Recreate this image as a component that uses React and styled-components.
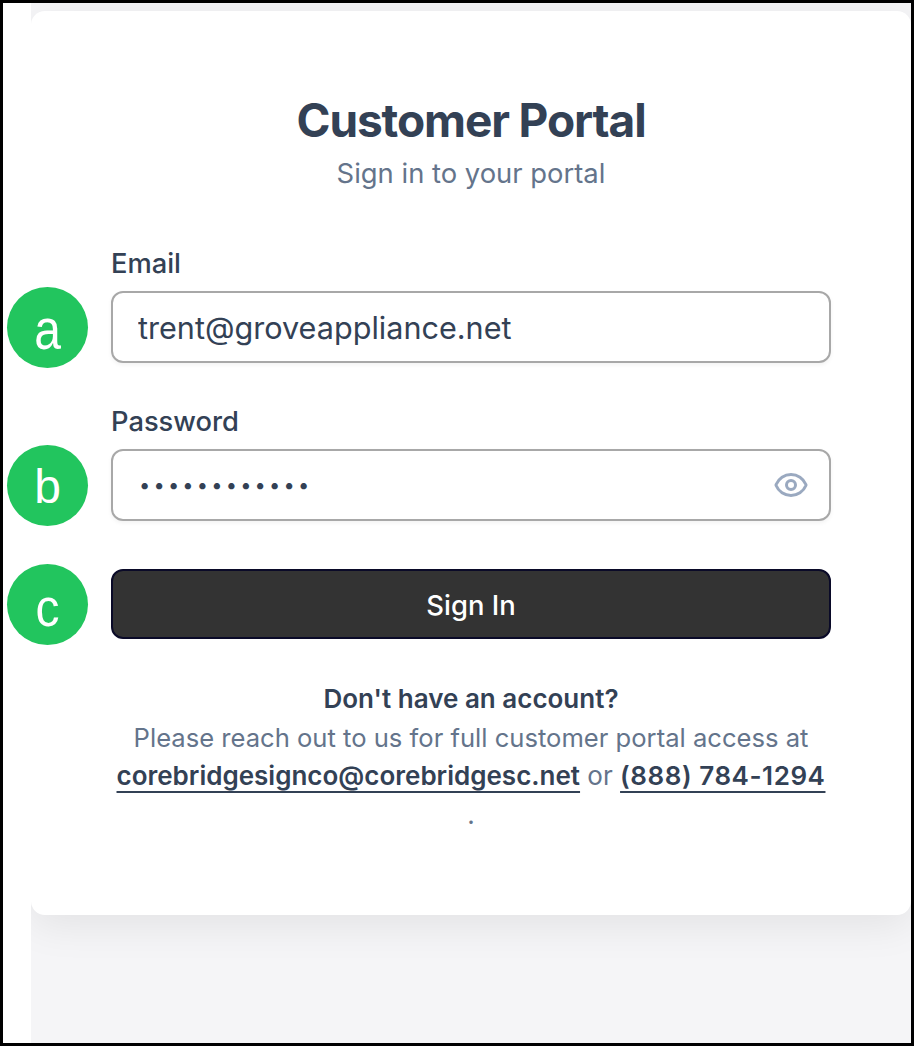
import React from "react";
import styled, { createGlobalStyle } from "styled-components";
import { Eye } from "lucide-react";

const Global = createGlobalStyle`
  html, body { margin: 0; padding: 0; background: #fff; }
  * { box-sizing: border-box; }
`;

const Frame = styled.div`
  position: relative;
  width: 914px;
  height: 1046px;
  border: 3px solid #000;
  background: #fff;
  overflow: hidden;
  font-family: Inter, "Liberation Sans", sans-serif;
  color: #334155;
`;

const Page = styled.main`
  margin-left: 28px;
  height: 100%;
  padding-top: 8px;
  background: #f5f5f7;
  overflow: hidden;
`;

const Card = styled.section`
  width: 880px;
  height: 904px;
  padding: 80px 80px 0;
  background: #fff;
  border-radius: 14px;
  box-shadow: 0 10px 40px rgba(0, 0, 0, 0.08);
`;

const Header = styled.header`
  text-align: center;
  margin-bottom: 55px;
`;

const Title = styled.h1`
  margin: 0;
  font-size: 46px;
  line-height: 58px;
  font-weight: 700;
  letter-spacing: -1.1px;
  color: #334155;
`;

const Subtitle = styled.p`
  margin: 6px 0 0;
  font-size: 27.4px;
  line-height: 36px;
  color: #64748b;
`;

const Form = styled.form`
  display: flex;
  flex-direction: column;
`;

const Field = styled.div`
  display: flex;
  flex-direction: column;
  margin-bottom: ${(p) => p.$gap}px;
`;

const Label = styled.label`
  font-size: 27.3px;
  line-height: 36px;
  font-weight: 500;
  color: #334155;
  margin-bottom: 9px;
`;

const InputWrap = styled.div`
  position: relative;
`;

const Input = styled.input`
  display: block;
  width: 100%;
  height: 72px;
  padding: 0 ${(p) => p.$pad}px;
  border: 2px solid #a8a8a8;
  border-radius: 12px;
  background: #fff;
  outline: none;
  font-family: inherit;
  font-size: ${(p) => p.$size}px;
  color: #334155;
  box-shadow: 0 2px 4px rgba(0, 0, 0, 0.05);
  letter-spacing: ${(p) => p.$spacing || "normal"};
`;

const EyeButton = styled.span`
  position: absolute;
  right: 22px;
  top: 18px;
  display: flex;
  color: #9aa9c0;
`;

const Submit = styled.button`
  height: 70px;
  padding: 2px 0 0;
  border: 2px solid #0a0a28;
  border-radius: 12px;
  background: #333;
  color: #fff;
  font-family: inherit;
  font-size: 27.4px;
  font-weight: 500;
`;

const Footer = styled.footer`
  margin-top: 40px;
  text-align: center;
  font-size: 26px;
  line-height: 39px;
  color: #64748b;
`;

const Strong = styled.div`
  font-weight: 600;
  color: #334155;
`;

const Line = styled.div`
  white-space: nowrap;
  font-size: ${(p) => p.$size || 26}px;
  margin-top: ${(p) => p.$shift || 0}px;
`;

const Contact = styled.a`
  font-weight: 600;
  color: #334155;
  letter-spacing: ${(p) => p.$spacing || "normal"};
  text-decoration: underline;
  text-decoration-thickness: 2px;
  text-underline-offset: 6px;
  text-decoration-skip-ink: none;
`;

const Badge = styled.div`
  position: absolute;
  left: 4px;
  top: ${(p) => p.$top}px;
  width: 81px;
  height: 81px;
  padding-top: ${(p) => p.$nudge}px;
  border-radius: 50%;
  background: #22c55e;
  color: #fff;
  display: flex;
  align-items: center;
  justify-content: center;
  font-family: "Liberation Sans", Arial, sans-serif;
  font-size: 48px;
  line-height: 1;
`;

const Letter = styled.span`
  display: inline-block;
  transform: scaleY(${(p) => p.$stretch});
`;

export default function App() {
  return (
    <>
      <Global />
      <Frame>
        <Page>
          <Card>
            <Header>
              <Title>Customer Portal</Title>
              <Subtitle>Sign in to your portal</Subtitle>
            </Header>
            <Form onSubmit={(e) => e.preventDefault()}>
              <Field $gap={41}>
                <Label>Email</Label>
                <Input type="email" readOnly value="trent@groveappliance.net" $size={30.6} $pad={25} />
              </Field>
              <Field $gap={48}>
                <Label>Password</Label>
                <InputWrap>
                  <Input type="password" readOnly value="************" $size={20} $pad={26} $spacing="3.2px" />
                  <EyeButton>
                    <Eye size={36} strokeWidth={2} />
                  </EyeButton>
                </InputWrap>
              </Field>
              <Submit type="submit">Sign In</Submit>
            </Form>
            <Footer>
              <Strong>Don't have an account?</Strong>
              <Line $size={25.6}>Please reach out to us for full customer portal access at</Line>
              <Line $shift={-1}>
                <Contact href="#">corebridgesignco@corebridgesc.net</Contact> or{" "}
                <Contact href="#" $spacing="0.55px">(888) 784-1294</Contact>
              </Line>
              <Line>.</Line>
            </Footer>
          </Card>
        </Page>
        <Badge $top={284} $nudge={4}><Letter $stretch={1.2}>a</Letter></Badge>
        <Badge $top={442} $nudge={2}><Letter $stretch={1}>b</Letter></Badge>
        <Badge $top={561} $nudge={8}><Letter $stretch={1.08}>c</Letter></Badge>
      </Frame>
    </>
  );
}
